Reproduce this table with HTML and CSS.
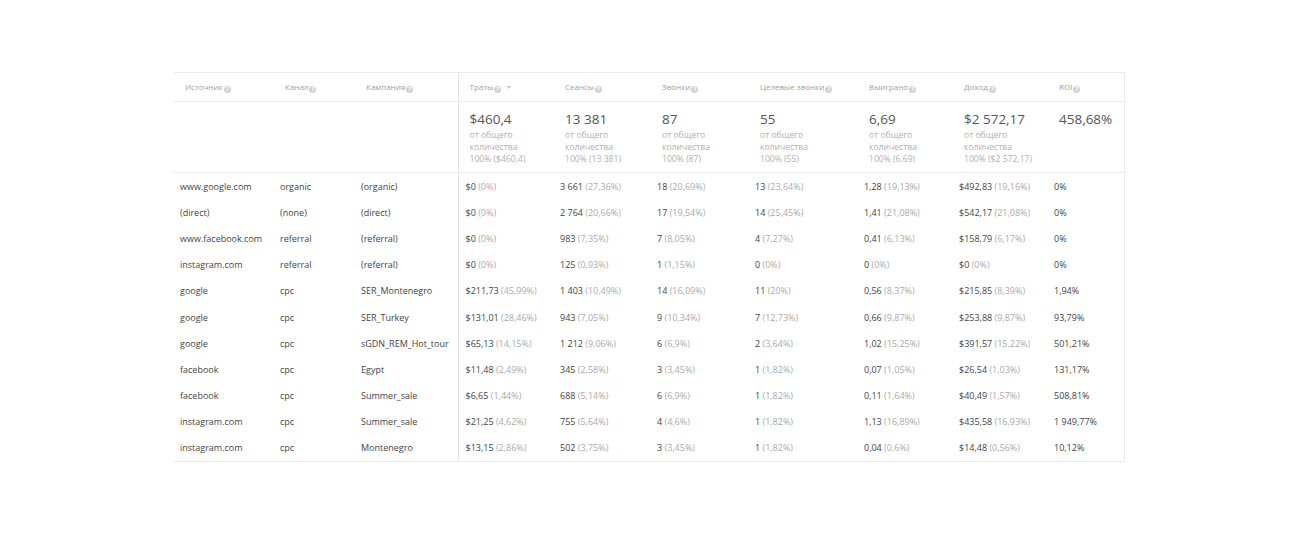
FILE: index.html
```html
<!DOCTYPE html>
<html lang="ru">
<head>
<meta charset="utf-8">
<title>Отчёт</title>
<link rel="stylesheet" href="styles.css">
</head>
<body>
<div class="wrap">
<table class="report">
<colgroup>
<col class="c1"><col class="c2"><col class="c3"><col class="c4"><col class="c5"><col class="c6"><col class="c7"><col class="c8"><col class="c9"><col class="c10">
</colgroup>
<thead>
<tr class="head">
<th>Источник<span class="q">?</span></th>
<th>Канал<span class="q">?</span></th>
<th>Кампания<span class="q">?</span></th>
<th class="div">Траты<span class="q">?</span><span class="sort"></span></th>
<th>Сеансы<span class="q">?</span></th>
<th>Звонки<span class="q">?</span></th>
<th>Целевые звонки<span class="q">?</span></th>
<th>Выиграно<span class="q">?</span></th>
<th>Доход<span class="q">?</span></th>
<th>ROI<span class="q">?</span></th>
</tr>
<tr class="sum">
<td></td><td></td><td></td>
<td class="div"><div class="big">$460,4</div><div class="sub">от общего<br>количества<br>100% ($460,4)</div></td>
<td><div class="big">13 381</div><div class="sub">от общего<br>количества<br>100% (13 381)</div></td>
<td><div class="big">87</div><div class="sub">от общего<br>количества<br>100% (87)</div></td>
<td><div class="big">55</div><div class="sub">от общего<br>количества<br>100% (55)</div></td>
<td><div class="big">6,69</div><div class="sub">от общего<br>количества<br>100% (6,69)</div></td>
<td><div class="big">$2 572,17</div><div class="sub">от общего<br>количества<br>100% ($2 572,17)</div></td>
<td><div class="big">458,68%</div></td>
</tr>
</thead>
<tbody>
<tr><td>www.google.com</td><td>organic</td><td>(organic)</td><td class="div">$0 <i>(0%)</i></td><td>3 661 <i>(27,36%)</i></td><td>18 <i>(20,69%)</i></td><td>13 <i>(23,64%)</i></td><td>1,28 <i>(19,13%)</i></td><td>$492,83 <i>(19,16%)</i></td><td>0%</td></tr>
<tr><td>(direct)</td><td>(none)</td><td>(direct)</td><td class="div">$0 <i>(0%)</i></td><td>2 764 <i>(20,66%)</i></td><td>17 <i>(19,54%)</i></td><td>14 <i>(25,45%)</i></td><td>1,41 <i>(21,08%)</i></td><td>$542,17 <i>(21,08%)</i></td><td>0%</td></tr>
<tr><td>www.facebook.com</td><td>referral</td><td>(referral)</td><td class="div">$0 <i>(0%)</i></td><td>983 <i>(7,35%)</i></td><td>7 <i>(8,05%)</i></td><td>4 <i>(7,27%)</i></td><td>0,41 <i>(6,13%)</i></td><td>$158,79 <i>(6,17%)</i></td><td>0%</td></tr>
<tr><td>instagram.com</td><td>referral</td><td>(referral)</td><td class="div">$0 <i>(0%)</i></td><td>125 <i>(0,93%)</i></td><td>1 <i>(1,15%)</i></td><td>0 <i>(0%)</i></td><td>0 <i>(0%)</i></td><td>$0 <i>(0%)</i></td><td>0%</td></tr>
<tr><td>google</td><td>cpc</td><td>SER_Montenegro</td><td class="div">$211,73 <i>(45,99%)</i></td><td>1 403 <i>(10,49%)</i></td><td>14 <i>(16,09%)</i></td><td>11 <i>(20%)</i></td><td>0,56 <i>(8,37%)</i></td><td>$215,85 <i>(8,39%)</i></td><td>1,94%</td></tr>
<tr><td>google</td><td>cpc</td><td>SER_Turkey</td><td class="div">$131,01 <i>(28,46%)</i></td><td>943 <i>(7,05%)</i></td><td>9 <i>(10,34%)</i></td><td>7 <i>(12,73%)</i></td><td>0,66 <i>(9,87%)</i></td><td>$253,88 <i>(9,87%)</i></td><td>93,79%</td></tr>
<tr><td>google</td><td>cpc</td><td>sGDN_REM_Hot_tour</td><td class="div">$65,13 <i>(14,15%)</i></td><td>1 212 <i>(9,06%)</i></td><td>6 <i>(6,9%)</i></td><td>2 <i>(3,64%)</i></td><td>1,02 <i>(15,25%)</i></td><td>$391,57 <i>(15,22%)</i></td><td>501,21%</td></tr>
<tr><td>facebook</td><td>cpc</td><td>Egypt</td><td class="div">$11,48 <i>(2,49%)</i></td><td>345 <i>(2,58%)</i></td><td>3 <i>(3,45%)</i></td><td>1 <i>(1,82%)</i></td><td>0,07 <i>(1,05%)</i></td><td>$26,54 <i>(1,03%)</i></td><td>131,17%</td></tr>
<tr><td>facebook</td><td>cpc</td><td>Summer_sale</td><td class="div">$6,65 <i>(1,44%)</i></td><td>688 <i>(5,14%)</i></td><td>6 <i>(6,9%)</i></td><td>1 <i>(1,82%)</i></td><td>0,11 <i>(1,64%)</i></td><td>$40,49 <i>(1,57%)</i></td><td>508,81%</td></tr>
<tr><td>instagram.com</td><td>cpc</td><td>Summer_sale</td><td class="div">$21,25 <i>(4,62%)</i></td><td>755 <i>(5,64%)</i></td><td>4 <i>(4,6%)</i></td><td>1 <i>(1,82%)</i></td><td>1,13 <i>(16,89%)</i></td><td>$435,58 <i>(16,93%)</i></td><td>1 949,77%</td></tr>
<tr><td>instagram.com</td><td>cpc</td><td>Montenegro</td><td class="div">$13,15 <i>(2,86%)</i></td><td>502 <i>(3,75%)</i></td><td>3 <i>(3,45%)</i></td><td>1 <i>(1,82%)</i></td><td>0,04 <i>(0,6%)</i></td><td>$14,48 <i>(0,56%)</i></td><td>10,12%</td></tr>
</tbody>
</table>
</div>
</body>
</html>
```

FILE: styles.css
```css
html, body {
  margin: 0;
  padding: 0;
  background: #ffffff;
}
body {
  font-family: "Open Sans", "Liberation Sans", sans-serif;
  color: #444;
}
.wrap {
  padding: 72px 0 0 174px;
}
.report {
  border-collapse: collapse;
  table-layout: fixed;
  width: 950px;
  border-top: 1px solid #ececec;
  border-right: 1px solid #ececec;
  border-bottom: 1px solid #ececec;
}
.c1 { width: 100px; }
.c2 { width: 81px; }
.c3 { width: 103px; }
.c4 { width: 96px; }
.c5 { width: 97px; }
.c6 { width: 98px; }
.c7 { width: 109px; }
.c8 { width: 95px; }
.c9 { width: 95px; }
.c10 { width: 76px; }
.report th, .report td {
  text-align: left;
  vertical-align: top;
  white-space: nowrap;
  padding: 0 0 0 6px;
}
.report .head th {
  height: 28px;
  vertical-align: middle;
  font-weight: 400;
  font-size: 8px;
  color: #a0a0a0;
  padding-left: 11px;
  border-bottom: 1px solid #ececec;
}
.report .div {
  border-left: 1px solid #e4e4e4;
}
.q {
  display: inline-block;
  width: 7px;
  height: 7px;
  border-radius: 50%;
  background: #d2d2d2;
  color: #fff;
  font-size: 6px;
  line-height: 7px;
  text-align: center;
  font-weight: 700;
  vertical-align: -1px;
  margin-left: 1px;
}
.sort {
  display: inline-block;
  width: 0;
  height: 0;
  border-left: 2.5px solid transparent;
  border-right: 2.5px solid transparent;
  border-top: 3px solid #c4c4c4;
  margin-left: 6px;
  vertical-align: 1px;
}
.report .sum td {
  height: 61px;
  padding-top: 9px;
  padding-bottom: 0;
  padding-left: 11px;
  border-bottom: 1px solid #ececec;
}
.big {
  font-size: 13.5px;
  line-height: 16px;
  margin-bottom: 2px;
  color: #555;
}
.sub {
  font-size: 8.6px;
  line-height: 12px;
  color: #b0b0b0;
}
.report tbody td {
  height: 26.2px;
  vertical-align: middle;
  font-size: 9px;
  color: #444;
}
.report tbody td.div { padding-left: 7px; }
tbody i {
  font-style: normal;
  color: #aaa;
}
```
